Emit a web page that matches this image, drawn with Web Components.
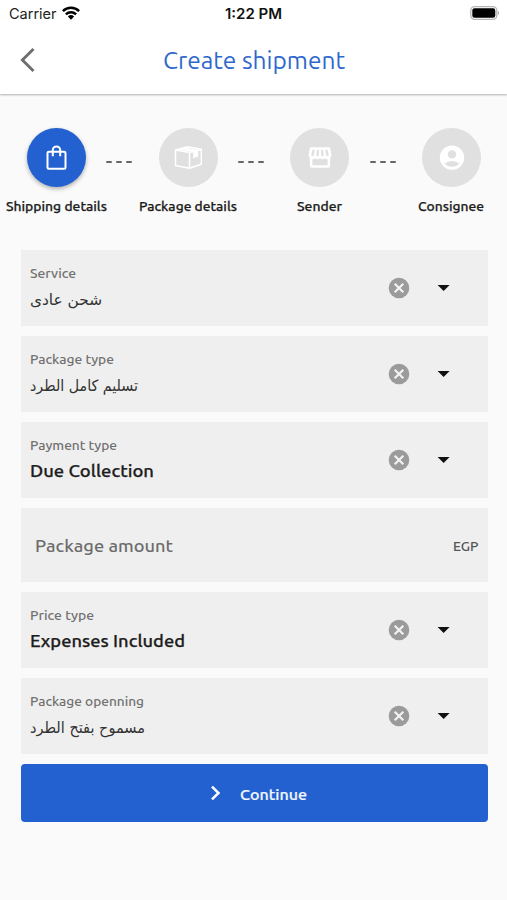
<!DOCTYPE html>
<html lang="en">
<head>
<meta charset="utf-8">
<title>Create shipment</title>
<style>
html,body{margin:0;padding:0;background:#fafafa}
body{width:507px;height:900px;overflow:hidden;font-family:Ubuntu,"Noto Sans","DejaVu Sans",sans-serif;color:#1d1d1d}
</style>
</head>
<body>
<shipment-page></shipment-page>
<script>
const define = (name, css, html, init) => {
  const t = document.createElement('template');
  t.innerHTML = `<style>:host{box-sizing:border-box}${css}</style>${html}`;
  customElements.define(name, class extends HTMLElement {
    connectedCallback() {
      if (this.shadowRoot) return;
      this.attachShadow({mode: 'open'}).append(t.content.cloneNode(true));
      if (init) init(this, this.shadowRoot);
    }
  });
};

/* Single line of text condensed or expanded to the width in its "w" attribute. */
define('fit-text',
  `:host{display:block;white-space:nowrap;flex:none}
   span{display:inline-block;transform-origin:0 50%}`,
  `<span><slot></slot></span>`,
  (el, root) => {
    const w = parseFloat(el.getAttribute('w'));
    const s = root.querySelector('span');
    el.style.width = w + 'px';
    s.style.transform = `scaleX(${w / s.getBoundingClientRect().width})`;
  });

define('status-bar',
  `:host{display:grid;grid-template-columns:1fr auto 1fr;align-items:center;height:28px;padding:0 8px 0 8.500px;color:#222;font-family:Inter,"Liberation Sans",sans-serif;font-size:14.3px;line-height:28px}
   .l{display:flex;align-items:center;gap:6px}
   .t{font-weight:600;color:#111}
   .r{justify-self:end;display:flex;margin-top:-2px}
   svg{display:block}`,
  `<div class="l"><fit-text w="47.500">Carrier</fit-text>
    <svg width="18" height="14" viewBox="0 0 18 14" style="margin-top:-3px"><g fill="none" stroke="#000" stroke-width="2.5"><path d="M.9 5.1a11.6 11.6 0 0 1 16.2 0"/><path d="M3.9 8.3a7.4 7.4 0 0 1 10.2 0"/></g><path d="M5.9 10.4a4.5 4.5 0 0 1 6.2 0L9 13.7z" fill="#000"/></svg></div>
   <fit-text class="t" w="57">1:22 PM</fit-text>
   <div class="r"><svg width="29" height="14" viewBox="0 0 29 14"><rect x=".8" y=".7" width="26" height="12.6" rx="3.8" fill="#fff" stroke="#b5b5b5" stroke-width="1.3"/><rect x="2.3" y="2.2" width="23" height="9.6" rx="2.2" fill="#000"/><path d="M27.800 4.800c1.600.7 1.600 3.700 0 4.400z" fill="#aaa"/></svg></div>`);

define('app-header',
  `:host{display:grid;grid-template-columns:1fr auto 1fr;align-items:center;height:65px;padding:0 20px;font-size:24px;line-height:32px;color:#2f68cc}
   .back{display:block;margin-top:-1px}
   fit-text{margin-left:1px}`,
  `<svg class="back" width="16" height="26" viewBox="0 0 16 26"><path d="M13.5 2 2.4 13l11.1 11" fill="none" stroke="#6e6e6e" stroke-width="2.9"/></svg>
   <fit-text w="182"><slot></slot></fit-text>`);

const icons = {
  bag: `<svg width="26" height="28" viewBox="0 0 26 28" fill="none" stroke="#fff" stroke-width="2"><rect x="3.5" y="7.7" width="18" height="17" rx="1.3"/><path d="M8.8 12.3V6.1a3.7 3.7 0 0 1 7.4 0v6.2"/></svg>`,
  box: `<svg width="30" height="26" viewBox="0 0 30 26" fill="none" stroke="#fff" stroke-width="1.5" stroke-linejoin="round"><path d="M2.500 5 14.500 1.700 28.300 4.300v14.900L16.500 23.300 2.500 20.400zM2.500 5 16.500 7.600 28.300 4.300M16.500 7.600v15.700M6.600 3.900l14.500 2.500M10.500 2.900l14.200 2.500"/><path d="M20.900 6.700 24.400 5.700v5.800l-1.700-.8-1.800 1.900z" fill="#fff"/></svg>`,
  store: `<svg width="24" height="23" viewBox="0 0 26 24"><path fill="#fff" fill-rule="evenodd" d="M3.700 1h18.600q1.500 0 2 1.600L25.300 9q.2 2-1.300 3.200V21q0 2-2 2H4q-2 0-2-2v-8.800Q.5 11 .7 9l1-6.400Q2.200 1 3.700 1zM4.800 13.800v6.500h16.400v-6.500q-1.900 0-3.200-1.100-1.200 1.100-2.500 1.100T13 12.700q-1 1.100-2.500 1.100T8 12.700q-1.300 1.100-3.200 1.100zM4.800 3.500 3.500 9.600q.3 1.100 1.400 1 1.300-.2 1.500-1.300L7.200 3.500zM9.700 3.500 9 9.500q.2 1.200 1.400 1.200T11.800 9.500v-6zM14.200 3.500v6q.2 1.200 1.400 1.200T17 9.500l-.7-6zM18.800 3.500l.8 5.800q.3 1.200 1.500 1.300 1.100 0 1.400-1l-1.300-6.100z"/></svg>`,
  user: `<svg width="26" height="26" viewBox="0 0 26 26"><circle cx="13" cy="12.700" r="12.200" fill="#fff"/><circle cx="13" cy="9.400" r="4.200" fill="#e0e0e0"/><path d="M5.700 18.700Q8.500 16.100 13 16.100T20.300 18.700Q17.700 21.700 13 21.700T5.700 18.700z" fill="#e0e0e0"/></svg>`
};

define('step-item',
  `:host{display:flex;flex-direction:column;align-items:center;width:59px;flex:none}
   .c{width:59px;height:59px;border-radius:50%;background:#e0e0e0;display:flex;align-items:center;justify-content:center}
   :host([active]) .c{background:#2361d0;box-shadow:0 2px 4px rgba(0,0,0,.3)}
   .label{font-size:13.6px;line-height:20px;font-weight:500;margin:9px 0 0 -1px;-webkit-text-stroke:.25px}
   svg{display:block}`,
  `<div class="c"></div><div class="label"></div>`,
  (el, root) => {
    root.querySelector('.c').innerHTML = icons[el.getAttribute('icon')];
    root.querySelector('.label').innerHTML = `<fit-text w="${el.getAttribute('w')}">${el.getAttribute('label')}</fit-text>`;
  });

define('step-dashes',
  `:host{display:flex;justify-content:center;gap:4px;width:72.700px;padding:33px 6px 0 0;flex:none}
   i{width:6px;height:2px;border-radius:1px;background:#666}`,
  `<i></i><i></i><i></i>`);

define('step-bar',
  `:host{display:flex;align-items:flex-start;padding:34px 0 0 27px;height:156px;width:507px}`,
  `<slot></slot>`);

define('select-field',
  `:host{display:flex;align-items:center;background:#efefef;height:76px;padding:0 37px 0 9px}
   .text{flex:1;align-self:stretch;padding-top:14px}
   .lab{color:#717171;font-size:13.300px;line-height:20px;font-weight:500;display:block}
   .val{font-size:17.300px;line-height:26px;margin-top:2px;font-weight:500;-webkit-text-stroke:.25px;color:#1d1d1d;display:block}
   :host([rtl]) .val{font-family:"DejaVu Sans",sans-serif;font-weight:400;font-size:15.500px;color:#333;margin-top:3px;-webkit-text-stroke:0}
   .x{margin-right:26px}
   svg{display:block;flex:none}`,
  `<div class="text"></div>
   <svg class="x" width="22" height="22" viewBox="0 0 22 22"><circle cx="11" cy="11" r="10.300" fill="#9b9b9b"/><path d="m6.700 6.700 8.600 8.600m0-8.600-8.600 8.600" stroke="#f2f2f2" stroke-width="2.200"/></svg>
   <svg width="15" height="8" viewBox="0 0 15 8"><path d="M1.600 1h12L7.600 7z" fill="#111"/></svg>`,
  (el, root) => {
    const a = n => el.getAttribute(n);
    root.querySelector('.text').innerHTML =
      `<fit-text class="lab" w="${a('lw')}">${a('label')}</fit-text><fit-text class="val" w="${a('vw')}">${a('value')}</fit-text>`;
  });

define('amount-field',
  `:host{display:flex;align-items:center;justify-content:space-between;background:#efefef;height:74px;padding:2px 9.500px 0 14px;font-weight:500;color:#6c6c6c;font-size:17.300px;line-height:26px}
   .u{font-size:13.500px;color:#555;margin-top:-1px}`,
  `<fit-text w="138">Package amount</fit-text><fit-text class="u" w="25.500">EGP</fit-text>`);

define('primary-button',
  `:host{display:flex;align-items:center;justify-content:center;gap:18px;height:58px;padding-left:8px;border-radius:4px;background:#2361d0;color:#f4f8ff;font-size:15.600px;font-weight:500;line-height:24px;-webkit-text-stroke:.2px}
   svg{display:block}
   fit-text{margin-top:1px}`,
  `<svg width="12" height="16" viewBox="0 0 12 16"><path d="m2 1.700 6.500 6.300L2 14.300" fill="none" stroke="#fff" stroke-width="2.500"/></svg><fit-text w="67"><slot></slot></fit-text>`);

define('shipment-page',
  `:host{display:block;width:507px;height:900px;background:#fafafa}
   header{background:#fff;box-shadow:0 1px 2px rgba(0,0,0,.3);height:94px}
   main{display:grid;gap:10px;padding:0 19.500px 0 20.500px}`,
  `<header><status-bar></status-bar><app-header>Create shipment</app-header></header>
   <step-bar>
     <step-item active icon="bag" label="Shipping details" w="101"></step-item><step-dashes></step-dashes>
     <step-item icon="box" label="Package details" w="98"></step-item><step-dashes></step-dashes>
     <step-item icon="store" label="Sender" w="45"></step-item><step-dashes></step-dashes>
     <step-item icon="user" label="Consignee" w="66"></step-item>
   </step-bar>
   <main>
     <select-field rtl label="Service" lw="46" value="شحن عادى" vw="72"></select-field>
     <select-field rtl label="Package type" lw="84" value="تسليم كامل الطرد" vw="108"></select-field>
     <select-field label="Payment type" lw="87" value="Due Collection" vw="124"></select-field>
     <amount-field></amount-field>
     <select-field label="Price type" lw="64" value="Expenses Included" vw="155"></select-field>
     <select-field rtl label="Package openning" lw="114" value="مسموح بفتح الطرد" vw="115"></select-field>
     <primary-button>Continue</primary-button>
   </main>`);
</script>
</body>
</html>
